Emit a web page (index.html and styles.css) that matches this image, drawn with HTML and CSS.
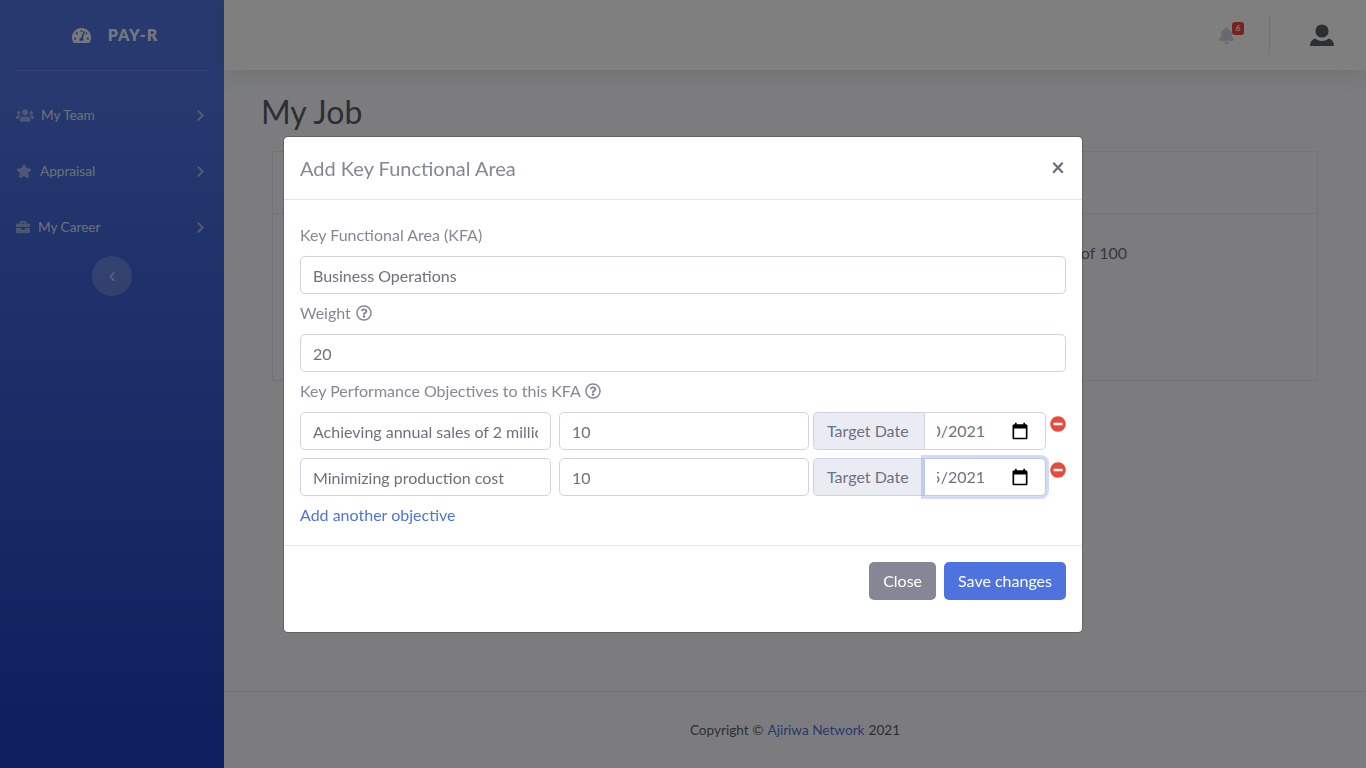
FILE: index.html
```html
<!DOCTYPE html>
<html lang="en">
<head>
<meta charset="utf-8">
<title>My Job</title>
<link rel="stylesheet" href="styles.css">
</head>
<body>
<aside class="sidebar">
  <div class="brand">
    <svg class="brand-icon" viewBox="0 0 576 512"><path d="M288 32C128.94 32 0 160.94 0 320c0 52.8 14.25 102.26 39.06 144.8 5.61 9.62 16.3 15.2 27.44 15.2h443c11.14 0 21.83-5.58 27.44-15.2C561.75 422.26 576 372.8 576 320c0-159.06-128.94-288-288-288zm0 64c14.71 0 26.58 10.13 30.32 23.65-1.11 2.26-2.64 4.23-3.45 6.67l-9.22 27.67c-5.13 3.49-10.97 6.01-17.64 6.01-17.67 0-32-14.33-32-32S270.33 96 288 96zM96 384c-17.67 0-32-14.33-32-32s14.33-32 32-32 32 14.33 32 32-14.33 32-32 32zm48-160c-17.67 0-32-14.33-32-32s14.33-32 32-32 32 14.33 32 32-14.33 32-32 32zm246.77-72.41l-61.33 184C343.13 347.33 352 364.54 352 384c0 11.72-3.38 22.55-8.88 32H232.88c-5.5-9.45-8.88-20.28-8.88-32 0-33.94 26.5-61.43 59.9-63.59l61.34-184.01c4.17-12.56 17.73-19.45 30.36-15.17 12.57 4.19 19.35 17.79 15.17 30.36zm14.66 57.2l15.52-46.55c3.47-1.29 7.13-2.23 11.05-2.23 17.67 0 32 14.33 32 32s-14.33 32-32 32c-11.38-.01-20.89-6.28-26.57-15.22zM480 384c-17.67 0-32-14.33-32-32s14.33-32 32-32 32 14.33 32 32-14.33 32-32 32z"/></svg>
    <span class="brand-text">PAY-R</span>
  </div>
  <hr class="side-divider">
  <nav class="nav">
    <a class="nav-item">
      <svg class="nav-icon users" viewBox="0 0 640 512"><path d="M96 224c35.3 0 64-28.7 64-64s-28.7-64-64-64-64 28.7-64 64 28.7 64 64 64zm448 0c35.3 0 64-28.7 64-64s-28.7-64-64-64-64 28.7-64 64 28.7 64 64 64zm32 32h-64c-17.6 0-33.5 7.1-45.1 18.6 40.3 22.1 68.9 62 75.1 109.4h66c17.7 0 32-14.3 32-32v-32c0-35.3-28.7-64-64-64zm-256 0c61.9 0 112-50.1 112-112S381.9 32 320 32 208 82.1 208 144s50.1 112 112 112zm76.8 32h-8.3c-20.8 10-43.9 16-68.5 16s-47.6-6-68.5-16h-8.3C179.6 288 128 339.6 128 403.2V432c0 26.5 21.5 48 48 48h288c26.5 0 48-21.5 48-48v-28.8c0-63.6-51.6-115.2-115.2-115.2zm-223.7-13.4C161.5 263.1 145.6 256 128 256H64c-35.3 0-64 28.7-64 64v32c0 17.7 14.3 32 32 32h65.9c6.3-47.4 34.9-87.3 75.2-109.4z"/></svg>
      <span class="nav-label">My Team</span>
      <svg class="chev" viewBox="0 0 320 512"><path d="M285.476 272.971L91.132 467.314c-9.373 9.373-24.569 9.373-33.941 0l-22.667-22.667c-9.357-9.357-9.375-24.522-.04-33.901L188.505 256 34.484 101.255c-9.335-9.379-9.317-24.544.04-33.901l22.667-22.667c9.373-9.373 24.569-9.373 33.941 0L285.475 239.03c9.373 9.372 9.373 24.568.001 33.941z"/></svg>
    </a>
    <a class="nav-item">
      <svg class="nav-icon star" viewBox="0 0 576 512"><path d="M259.3 17.8L194 150.2 47.9 171.5c-26.2 3.8-36.7 36.1-17.7 54.6l105.7 103-25 145.5c-4.5 26.3 23.2 46 46.4 33.7L288 439.6l130.7 68.7c23.2 12.2 50.9-7.4 46.4-33.7l-25-145.5 105.7-103c19-18.5 8.5-50.8-17.7-54.6L382 150.2 316.7 17.8c-11.7-23.6-45.6-23.9-57.4 0z"/></svg>
      <span class="nav-label">Appraisal</span>
      <svg class="chev" viewBox="0 0 320 512"><path d="M285.476 272.971L91.132 467.314c-9.373 9.373-24.569 9.373-33.941 0l-22.667-22.667c-9.357-9.357-9.375-24.522-.04-33.901L188.505 256 34.484 101.255c-9.335-9.379-9.317-24.544.04-33.901l22.667-22.667c9.373-9.373 24.569-9.373 33.941 0L285.475 239.03c9.373 9.372 9.373 24.568.001 33.941z"/></svg>
    </a>
    <a class="nav-item">
      <svg class="nav-icon case" viewBox="0 0 512 512"><path d="M320 336c0 8.84-7.16 16-16 16h-96c-8.84 0-16-7.16-16-16v-48H0v144c0 25.6 22.4 48 48 48h416c25.6 0 48-22.4 48-48V288H320v48zm144-208h-80V80c0-25.6-22.4-48-48-48H176c-25.6 0-48 22.4-48 48v48H48c-25.6 0-48 22.4-48 48v80h512v-80c0-25.6-22.4-48-48-48zm-144 0H192V96h128v32z"/></svg>
      <span class="nav-label">My Career</span>
      <svg class="chev" viewBox="0 0 320 512"><path d="M285.476 272.971L91.132 467.314c-9.373 9.373-24.569 9.373-33.941 0l-22.667-22.667c-9.357-9.357-9.375-24.522-.04-33.901L188.505 256 34.484 101.255c-9.335-9.379-9.317-24.544.04-33.901l22.667-22.667c9.373-9.373 24.569-9.373 33.941 0L285.475 239.03c9.373 9.372 9.373 24.568.001 33.941z"/></svg>
    </a>
  </nav>
  <button class="side-toggle" type="button" aria-label="Collapse">
    <svg viewBox="0 0 320 512"><path d="M34.52 239.03L228.87 44.69c9.37-9.37 24.57-9.37 33.94 0l22.67 22.67c9.36 9.36 9.37 24.52.04 33.9L131.49 256l154.02 154.75c9.34 9.38 9.32 24.54-.04 33.9l-22.67 22.67c-9.37 9.37-24.57 9.37-33.94 0L34.52 272.97c-9.37-9.37-9.37-24.57 0-33.94z"/></svg>
  </button>
</aside>

<div class="main">
  <header class="topbar">
    <div class="bell-wrap">
      <svg class="bell" viewBox="0 0 448 512"><path d="M224 512c35.32 0 63.97-28.65 63.97-64H160.03c0 35.35 28.65 64 63.97 64zm215.39-149.71c-19.32-20.76-55.47-51.99-55.47-154.29 0-77.7-54.48-139.9-127.94-155.16V32c0-17.67-14.32-32-31.98-32s-31.98 14.33-31.98 32v20.84C118.56 68.1 64.08 130.3 64.08 208c0 102.3-36.15 133.53-55.47 154.29-6 6.45-8.66 14.16-8.61 21.71.11 16.4 12.98 32 32.1 32h383.8c19.12 0 32-15.6 32.1-32 .05-7.55-2.61-15.27-8.61-21.71z"/></svg>
      <span class="badge">6</span>
    </div>
    <div class="top-divider"></div>
    <svg class="avatar" viewBox="0 0 24 22"><circle cx="12" cy="7" r="6.6"/><path d="M0 22c0-4 2-6.4 5.2-7.4 1.7 1.6 4 2.4 6.8 2.4s5.100-.8 6.800-2.400C22 15.600 24 18 24 22z"/></svg>
  </header>

  <main class="content">
    <h1 class="page-title">My Job</h1>
    <section class="card">
      <div class="card-head"></div>
      <div class="card-body"><span>Total weight assigned is 20 of 100</span></div>
    </section>
  </main>

  <footer class="footer">Copyright © <a class="foot-link">Ajiriwa Network</a> 2021</footer>
</div>

<div class="backdrop"></div>

<div class="modal" role="dialog">
  <div class="modal-head">
    <h5 class="modal-title">Add Key Functional Area</h5>
    <span class="close">×</span>
  </div>
  <form class="modal-body">
    <label class="field-label">Key Functional Area (KFA)</label>
    <input class="control" type="text" value="Business Operations">
    <label class="field-label">Weight
      <svg class="help" viewBox="0 0 512 512"><path d="M256 8C119.043 8 8 119.083 8 256c0 136.997 111.043 248 248 248s248-111.003 248-248C504 119.083 392.957 8 256 8zm0 448c-110.532 0-200-89.431-200-200 0-110.495 89.472-200 200-200 110.491 0 200 89.471 200 200 0 110.530-89.431 200-200 200zm107.244-255.200c0 67.052-72.421 68.084-72.421 92.863V300c0 6.627-5.373 12-12 12h-45.647c-6.627 0-12-5.373-12-12v-8.659c0-35.745 27.100-50.034 47.579-61.516 17.561-9.845 28.324-16.541 28.324-29.579 0-17.246-21.999-28.693-39.784-28.693-23.189 0-33.894 10.977-48.942 29.969-4.057 5.120-11.460 6.071-16.666 2.124l-27.824-21.098c-5.107-3.872-6.251-11.066-2.644-16.363C184.846 131.491 214.940 112 261.794 112c49.071 0 101.450 38.304 101.450 88.800zM298 368c0 23.159-18.841 42-42 42s-42-18.841-42-42 18.841-42 42-42 42 18.841 42 42z"/></svg>
    </label>
    <input class="control" type="text" value="20">
    <label class="field-label">Key Performance Objectives to this KFA
      <svg class="help" viewBox="0 0 512 512"><path d="M256 8C119.043 8 8 119.083 8 256c0 136.997 111.043 248 248 248s248-111.003 248-248C504 119.083 392.957 8 256 8zm0 448c-110.532 0-200-89.431-200-200 0-110.495 89.472-200 200-200 110.491 0 200 89.471 200 200 0 110.530-89.431 200-200 200zm107.244-255.200c0 67.052-72.421 68.084-72.421 92.863V300c0 6.627-5.373 12-12 12h-45.647c-6.627 0-12-5.373-12-12v-8.659c0-35.745 27.100-50.034 47.579-61.516 17.561-9.845 28.324-16.541 28.324-29.579 0-17.246-21.999-28.693-39.784-28.693-23.189 0-33.894 10.977-48.942 29.969-4.057 5.120-11.460 6.071-16.666 2.124l-27.824-21.098c-5.107-3.872-6.251-11.066-2.644-16.363C184.846 131.491 214.940 112 261.794 112c49.071 0 101.450 38.304 101.450 88.800zM298 368c0 23.159-18.841 42-42 42s-42-18.841-42-42 18.841-42 42-42 42 18.841 42 42z"/></svg>
    </label>

    <div class="obj-row">
      <input class="control obj-name" type="text" value="Achieving annual sales of 2 million">
      <input class="control obj-weight" type="text" value="10">
      <div class="date-group">
        <span class="addon">Target Date</span>
        <div class="date-box">
          <span class="date-clip"><span>01/10/2021</span></span>
          <svg class="cal" viewBox="0 0 24 24"><path d="M19 4h-1V2h-2v2H8V2H6v2H5c-1.110 0-2 .9-2 2v14c0 1.100.89 2 2 2h14c1.100 0 2-.9 2-2V6c0-1.100-.9-2-2-2zm0 16H5V9h14v11z"/></svg>
        </div>
      </div>
      <svg class="remove" viewBox="0 0 512 512"><circle class="remove-bar" cx="256" cy="256" r="170"/><path d="M256 8C119 8 8 119 8 256s111 248 248 248 248-111 248-248S393 8 256 8zM124 296c-6.600 0-12-5.400-12-12v-56c0-6.600 5.400-12 12-12h264c6.600 0 12 5.400 12 12v56c0 6.600-5.400 12-12 12H124z"/></svg>
    </div>
    <div class="obj-row">
      <input class="control obj-name" type="text" value="Minimizing production cost">
      <input class="control obj-weight" type="text" value="10">
      <div class="date-group">
        <span class="addon">Target Date</span>
        <div class="date-box focused">
          <span class="date-clip"><span>06/15/2021</span></span>
          <svg class="cal" viewBox="0 0 24 24"><path d="M19 4h-1V2h-2v2H8V2H6v2H5c-1.110 0-2 .9-2 2v14c0 1.100.89 2 2 2h14c1.100 0 2-.9 2-2V6c0-1.100-.9-2-2-2zm0 16H5V9h14v11z"/></svg>
        </div>
      </div>
      <svg class="remove" viewBox="0 0 512 512"><circle class="remove-bar" cx="256" cy="256" r="170"/><path d="M256 8C119 8 8 119 8 256s111 248 248 248 248-111 248-248S393 8 256 8zM124 296c-6.600 0-12-5.400-12-12v-56c0-6.600 5.400-12 12-12h264c6.600 0 12 5.400 12 12v56c0 6.600-5.400 12-12 12H124z"/></svg>
    </div>
    <a class="add-link">Add another objective</a>
  </form>
  <div class="modal-foot">
    <button class="btn btn-grey" type="button">Close</button>
    <button class="btn btn-blue" type="button">Save changes</button>
  </div>
</div>
</body>
</html>
```
FILE: styles.css
```css
* { box-sizing: border-box; }
html, body { height: 100%; }
body {
  margin: 0;
  display: flex;
  height: 768px;
  overflow: hidden;
  font-family: "Lato", "Open Sans", sans-serif;
  font-size: 16px;
  line-height: 24px;
  color: #858796;
  background: #f8f9fc;
}

/* sidebar */
.sidebar {
  width: 224px;
  flex: none;
  display: flex;
  flex-direction: column;
  background: linear-gradient(180deg, #4e73df 10%, #1c3cbc 100%);
}
.brand {
  height: 70px;
  display: flex;
  align-items: center;
  justify-content: center;
  gap: 17px;
  color: rgba(255,255,255,.9);
}
.brand-icon { width: 19px; height: 17px; fill: currentColor; margin-left: 8px; }
.brand-text { font-weight: 800; font-size: 16px; letter-spacing: 1px; margin-right: 2px; }
.side-divider {
  margin: 0 16px;
  height: 1px;
  border: 0;
  background: rgba(255,255,255,.15);
  flex: none;
}
.nav { padding-top: 16px; display: flex; flex-direction: column; }
.nav-item {
  height: 56px;
  display: flex;
  align-items: center;
  padding: 0 19px 0 16px;
  font-size: 13.6px;
  color: rgba(255,255,255,.8);
}
.nav-icon { fill: rgba(255,255,255,.45); flex: none; }
.users { width: 18px; height: 15px; margin-right: 7px; }
.star { width: 16px; height: 14px; margin-right: 8px; }
.case { width: 14px; height: 14px; margin-right: 8px; }
.nav-label { flex: 1; }
.chev { width: 9px; height: 13px; fill: rgba(255,255,255,.5); flex: none; }
.side-toggle {
  width: 40px;
  height: 40px;
  margin: 1px auto 0;
  padding: 0;
  border: 0;
  border-radius: 50%;
  background: rgba(255,255,255,.2);
  display: flex;
  align-items: center;
  justify-content: center;
}
.side-toggle svg { width: 8px; height: 11px; fill: rgba(255,255,255,.5); }

/* main column */
.main { flex: 1; min-width: 0; display: flex; flex-direction: column; }
.topbar {
  height: 70px;
  flex: none;
  background: #fff;
  box-shadow: 0 2px 28px rgba(58,59,69,.15);
  display: flex;
  align-items: center;
  justify-content: flex-end;
  padding-right: 32px;
  position: relative;
}
.bell-wrap { position: relative; width: 16px; height: 18px; margin-right: 34px; margin-top: 2px; }
.bell { display: block; width: 15px; height: 17px; fill: #d1d3e2; }
.badge {
  position: absolute;
  left: 13px;
  top: -5px;
  width: 12px;
  height: 13px;
  border-radius: 3px;
  background: #e74a3b;
  color: #fff;
  font-size: 8px;
  line-height: 13px;
  text-align: center;
  font-weight: 700;
}
.top-divider { width: 1px; height: 38px; background: #e3e6f0; margin-right: 40px; }
.avatar { width: 24px; height: 22px; fill: #5a5c69; }

.content { flex: 1; padding: 0 48px 0 37px; min-height: 0; }
.page-title {
  margin: 21px 0 18px;
  font-size: 32px;
  line-height: 42px;
  font-weight: 400;
  color: #5a5c69;
}
.card {
  margin-left: 11px;
  height: 230px;
  border: 1px solid #e3e6f0;
  background: #f8f9fc;
}
.card-head { height: 62px; border-bottom: 1px solid #e3e6f0; background: #f8f9fc; }
.card-body {
  padding: 27px 190px 0 0;
  display: flex;
  justify-content: flex-end;
  color: #6e707e;
}
.footer {
  flex: none;
  height: 77px;
  border-top: 1px solid #e3e6f0;
  background: #f8f9fc;
  display: flex;
  align-items: center;
  justify-content: center;
  gap: 4px;
  font-size: 13.6px;
  color: #5a5c69;
  padding-top: 0;
}
.foot-link { color: #4e73df; }

/* overlay */
.backdrop {
  position: fixed;
  inset: 0;
  background: rgba(0,0,0,.5);
}
.modal {
  position: fixed;
  left: 283px;
  top: 136px;
  width: 800px;
  background: #fff;
  border: 1px solid rgba(0,0,0,.2);
  background-clip: padding-box;
  border-radius: 5px;
  display: flex;
  flex-direction: column;
}
.modal-head {
  height: 63px;
  border-bottom: 1px solid #e3e6f0;
  padding: 0 16px;
  display: flex;
  align-items: center;
  justify-content: space-between;
}
.modal-title { margin: 0; font-size: 20px; font-weight: 400; color: #858796; line-height: 30px; }
.close { font-size: 24px; line-height: 24px; font-weight: 700; color: #6e707e; margin-right: 1px; margin-top: -2px; }
.modal-body {
  padding: 23px 16px 16px;
  display: flex;
  flex-direction: column;
  height: 345px;
}
.field-label { display: block; margin-bottom: 9px; height: 24px; color: #858796; }
.control {
  display: block;
  height: 38px;
  width: 100%;
  padding: 6px 12px;
  font: inherit;
  color: #6e707e;
  background: #fff;
  border: 1px solid #d1d3e2;
  border-radius: 5px;
  margin-bottom: 7px;
  outline: none;
}
.help { width: 16px; height: 16px; fill: #858796; vertical-align: -2px; margin-left: 1px; }
.obj-row { display: flex; align-items: flex-start; height: 38px; margin-bottom: 8px; }
.obj-name { width: 251px; flex: none; margin: 0 8px 0 0; }
.obj-weight { width: 250px; flex: none; margin: 0 4px 0 0; }
.date-group { width: 233px; flex: none; display: flex; height: 38px; }
.addon {
  width: 111px;
  flex: none;
  background: #eaecf4;
  border: 1px solid #d1d3e2;
  border-right: 0;
  border-radius: 5px 0 0 5px;
  padding: 6px 12px 6px 13px;
  color: #6e707e;
  white-space: nowrap;
}
.date-box {
  flex: 1;
  min-width: 0;
  display: flex;
  align-items: center;
  padding: 0 16px 0 12px;
  border: 1px solid #d1d3e2;
  border-radius: 0 5px 5px 0;
  color: #6e707e;
  background: #fff;
}
.date-box.focused {
  border-color: #bac8f3;
  box-shadow: 0 0 0 3px rgba(78,115,223,.25);
  position: relative;
}
.date-clip {
  width: 48px;
  overflow: hidden;
  display: flex;
  justify-content: flex-end;
  white-space: nowrap;
  margin-right: auto;
}
.cal { width: 20px; height: 20px; fill: #000; flex: none; margin-right: -1px; }
.remove { width: 16px; height: 16px; fill: #e74a3b; margin: 4px 0 0 4px; flex: none; }
.remove-bar { fill: #fff; }
.add-link { color: #4e73df; margin-top: -1px; }
.modal-foot {
  height: 87px;
  border-top: 1px solid #e3e6f0;
  padding: 16px;
  display: flex;
  justify-content: flex-end;
  align-items: flex-start;
  gap: 8px;
}
.btn {
  height: 38px;
  padding: 0 13px;
  border: 1px solid transparent;
  border-radius: 5px;
  font: inherit;
  color: #fff;
}
.btn-grey { background: #858796; }
.btn-blue { background: #4e73df; }
```
